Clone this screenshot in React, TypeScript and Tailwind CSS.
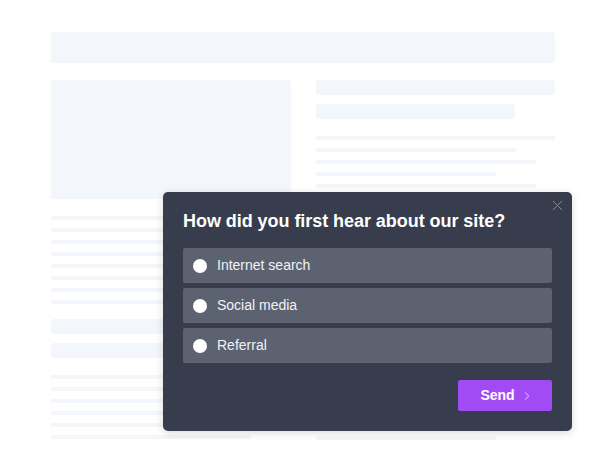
import { ChevronRight, X } from 'lucide-react';

const rightLines = ['w-full', 'w-[200px]', 'w-[220px]', 'w-[180px]', 'w-[220px]'];
const leftLines = Array.from({ length: 8 });
const leftLinesBottom = ['w-full', 'w-full', 'w-full', 'w-full', 'w-full', 'w-[200px]'];

const options = ['Internet search', 'Social media', 'Referral'];

function SurveyPopup() {
    return (
        <div className="absolute left-[163px] top-[192px] w-[409px] h-[239px] rounded-[5px] bg-[#373d4c] shadow-[0_2px_8px_rgba(0,0,0,0.15)] px-5 pt-4 pb-5 flex flex-col">
            <button className="absolute right-[6px] top-[5px] text-[#8b909c]">
                <X size={17} strokeWidth={1.3} />
            </button>
            <h2 className="text-[18px] leading-[26px] font-bold text-white tracking-[-0.05px]">
                How did you first hear about our site?
            </h2>
            <div className="mt-[14px] flex flex-col gap-[5px]">
                {options.map((label) => (
                    <label
                        key={label}
                        className="h-[35px] rounded-[2px] bg-[#5d6271] flex items-center pl-[10px] gap-[10px] cursor-pointer"
                    >
                        <span className="w-[14px] h-[14px] rounded-full bg-white" />
                        <span className="text-[14px] text-[#f1f2f5]">{label}</span>
                    </label>
                ))}
            </div>
            <div className="mt-[17px] flex justify-end">
                <button className="w-[94px] h-[31px] rounded-[2px] bg-[#a24af4] text-white text-[14px] font-bold flex items-center justify-center gap-[5px] pl-[4px]">
                    Send
                    <ChevronRight size={14} strokeWidth={1.5} className="text-[#eedffd]" />
                </button>
            </div>
        </div>
    );
}

export default function App() {
    return (
        <div
            className="relative w-[616px] h-[474px] bg-white overflow-hidden pt-8 px-[51px]"
            style={{ fontFamily: '"Liberation Sans", Arial, sans-serif' }}
        >
            <div className="h-[31px] w-[504px] rounded-[3px] bg-[#f3f6fb]" />
            <div className="mt-[17px] flex gap-[25px] w-[504px]">
                <div className="w-[240px] flex flex-col">
                    <div className="h-[119px] rounded-[3px] bg-[#f3f6fb]" />
                    <div className="mt-[17px] flex flex-col gap-[8px]">
                        {leftLines.map((_, i) => (
                            <div key={i} className="h-[4px] w-full bg-[#f3f6fb]" />
                        ))}
                    </div>
                    <div className="mt-[15px] h-[15px] rounded-[3px] bg-[#f3f6fb]" />
                    <div className="mt-[9px] h-[15px] rounded-[3px] bg-[#f3f6fb]" />
                    <div className="mt-[17px] flex flex-col gap-[8px]">
                        {leftLinesBottom.map((w, i) => (
                            <div key={i} className={`h-[4px] ${w} bg-[#f3f6fb]`} />
                        ))}
                    </div>
                </div>
                <div className="w-[239px] flex flex-col">
                    <div className="h-[15px] rounded-[3px] bg-[#f3f6fb]" />
                    <div className="mt-[9px] h-[15px] w-[199px] rounded-[3px] bg-[#f3f6fb]" />
                    <div className="mt-[17px] flex flex-col gap-[8px]">
                        {rightLines.map((w, i) => (
                            <div key={i} className={`h-[4px] ${w} bg-[#f3f6fb]`} />
                        ))}
                        {Array.from({ length: 20 }).map((_, i) => (
                            <div key={`f${i}`} className="h-[4px] w-full bg-[#f3f6fb]" />
                        ))}
                        <div className="h-[4px] w-[180px] bg-[#f3f6fb]" />
                    </div>
                </div>
            </div>
            <SurveyPopup />
        </div>
    );
}
